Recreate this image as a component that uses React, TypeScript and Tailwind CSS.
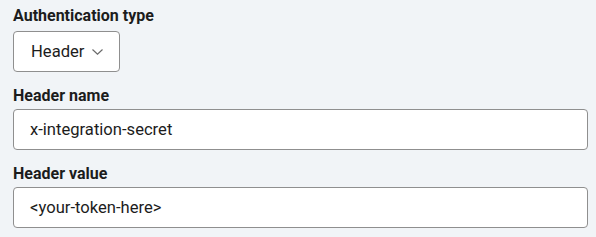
import React from "react";

export default function App() {
  return (
    <div className="w-[596px] h-[237px] bg-[#f1f4f7] pl-[13px] pr-[8px] pt-[6px] text-[#1c1c1c]" style={{ fontFamily: "Roboto, 'Noto Sans', sans-serif" }}>
      <label className="block text-[16px] leading-[20px] font-bold mb-[5px]">Authentication type</label>
      <button className="h-[41px] w-[107px] flex items-center pl-[17px] pr-[16px] pt-[1px] bg-white border border-[#8f8f8f] rounded-[4px] text-[16.6px]">
        <span>Header</span>
        <svg className="ml-auto" width="11" height="6" viewBox="0 0 11 6" fill="none">
          <path d="M0.5 0.5L5.5 5.2L10.5 0.5" stroke="#6b6b6b" strokeWidth="1.2" />
        </svg>
      </button>
      <label className="block text-[16px] leading-[20px] font-bold mt-[14px] mb-[3px]">Header name</label>
      <div className="h-[41px] flex items-center pl-[16px] pt-[1px] bg-white border border-[#8f8f8f] rounded-[4px] text-[16.6px]">
        x-integration-secret
      </div>
      <label className="block text-[16px] leading-[20px] font-bold mt-[14px] mb-[3px]">Header value</label>
      <div className="h-[41px] flex items-center pl-[16px] pt-[1px] bg-white border border-[#8f8f8f] rounded-[4px] text-[16.6px]">
        &lt;your-token-here&gt;
      </div>
    </div>
  );
}
